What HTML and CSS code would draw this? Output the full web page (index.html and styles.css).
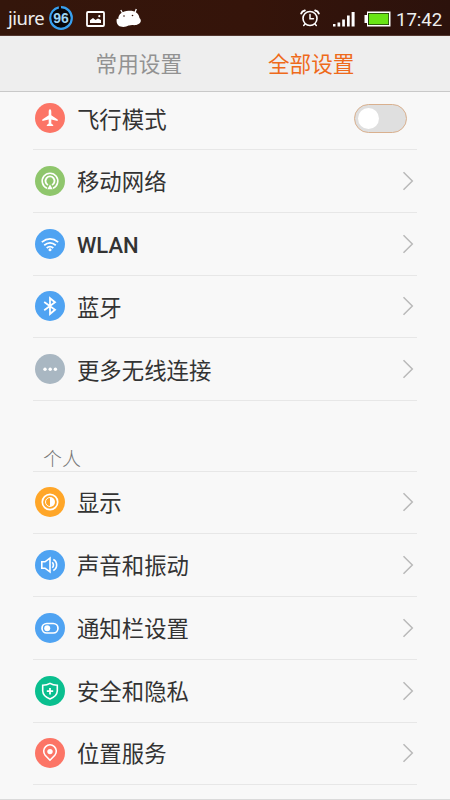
FILE: index.html
```
<!DOCTYPE html>
<html lang="zh-CN">
<head>
<meta charset="utf-8">
<title>全部设置</title>
<link rel="stylesheet" href="styles.css">
</head>
<body>
<div class="screen">
  <header class="status">
    <span class="carrier">jiure</span>
    <svg class="ring" width="24" height="24" viewBox="0 0 24 24"><circle cx="12" cy="12" r="11" fill="#08070a"/><circle cx="12" cy="12" r="10.8" fill="none" stroke="#38a0ef" stroke-width="2.2" stroke-dasharray="65.2 2.66" transform="rotate(-90 12 12)"/><text x="12" y="17" text-anchor="middle" class="ring-num">96</text></svg>
    <svg class="photo" width="19" height="16" viewBox="0 0 19 16"><rect x="1" y="1" width="17" height="14" rx="1" fill="none" stroke="#fff" stroke-width="1.8"/><path d="M4 12V9.300L7 7L9.500 9L12 7.500L15 9V12Z" fill="#fff"/><circle cx="13.300" cy="5.200" r="1.100" fill="#fff"/></svg>
    <svg class="droid" width="26" height="20" viewBox="0 0 26 20"><path d="M4.800 2L6.500 5M20.300 1L19 4.500" fill="none" stroke="#fff" stroke-width="1.300"/><path d="M2.300 11C2.300 6 6.500 3 12.500 2.700C19 2.400 23 5 23.500 10C25.500 11.500 25.300 15 22.500 16C20.500 17.300 18 17.300 16 17C14.500 17.300 13.500 17.300 12.500 17.500C10 19.300 5 19.500 2.500 17.500C.500 15.800.300 13 .800 10.800Z" fill="#fff"/><circle cx="8" cy="8" r=".8" fill="#34150c"/><circle cx="16.500" cy="7.500" r=".8" fill="#34150c"/></svg>
    <svg class="alarm" width="20" height="18" viewBox="0 0 20 18"><g fill="none" stroke="#fff" stroke-linecap="round"><circle cx="10" cy="9.500" r="7" stroke-width="1.600"/><path d="M10 5.500V9.700H13.500" stroke-width="1.500"/><path d="M1.200 4.500Q2 2 4.800 1.400M18.800 4.500Q18 2 15.200 1.400" stroke-width="2"/><path d="M5 15L3.700 16.500M15 15L16.300 16.500" stroke-width="1.500"/></g></svg>
    <svg class="signal" width="22" height="16" viewBox="0 0 22 16" fill="#fff"><path d="M0 13h2.500v2.500H0zM4.500 11.500h2.700v4H4.500zM9.200 8.500h2.700v7H9.200zM14 4.500h2.700v11H14zM18.600 1h3v14.500h-3z"/></svg>
    <svg class="battery" width="27" height="16" viewBox="0 0 27 16"><path d="M3 .500H26.500V15.500H3V12H.500V4H3Z" fill="#fff"/><rect x="4" y="2" width="21" height="12" fill="#203c08"/><rect x="5" y="2.800" width="19.300" height="10.400" fill="#69e515"/></svg>
    <span class="clock">17:42</span>
  </header>
  <nav class="tabs">
    <span class="tab">常用设置</span>
    <span class="tab active">全部设置</span>
  </nav>
  <main class="content">
    <ul class="list">
      <li class="row"><svg class="icon coral" viewBox="0 0 30 30"><path d="M15 6.200C14 6.200 13.700 7.500 13.700 9V12.300L7.300 16.600V18L13.700 16.500V20.500L11.800 22V22.900H18.200V22L16.300 20.500V16.500L22.700 18V16.600L16.300 12.300V9C16.300 7.500 16 6.200 15 6.200Z" fill="#fff"/></svg><span class="label">飞行模式</span><span class="switch"><span class="knob"></span></span></li>
      <li class="row"><svg class="icon green" viewBox="0 0 30 30"><g fill="none" stroke="#fff"><path d="M12 22.200A7.800 7.800 0 1 1 18 22.200" stroke-width="1.600"/><path d="M13 19A4.500 4.500 0 1 1 17 19" stroke-width="1.800"/></g><path d="M15 18.500L17.700 23.200H12.300Z" fill="#fff"/></svg><span class="label">移动网络</span><svg class="chevron" viewBox="0 0 12 20"><path d="M1.500 1.200L10.300 10L1.500 18.800"/></svg></li>
      <li class="row"><svg class="icon blue" viewBox="0 0 30 30"><g fill="none" stroke="#fff" stroke-width="1.800"><path d="M6.800 13.100Q15 6.800 23.200 13.100"/><path d="M9.200 16.200Q15 11.600 20.800 16.200"/><path d="M11.700 19Q15 16.200 18.300 19"/></g><circle cx="15" cy="20.800" r="1.500" fill="#fff"/></svg><span class="label latin">WLAN</span><svg class="chevron" viewBox="0 0 12 20"><path d="M1.500 1.200L10.300 10L1.500 18.800"/></svg></li>
      <li class="row"><svg class="icon blue" viewBox="0 0 30 30"><path d="M9.200 11L20 18.800L15 23V7.200L20 11.300L9.200 19.200" fill="none" stroke="#fff" stroke-width="1.800"/></svg><span class="label">蓝牙</span><svg class="chevron" viewBox="0 0 12 20"><path d="M1.500 1.200L10.300 10L1.500 18.800"/></svg></li>
      <li class="row"><svg class="icon gray" viewBox="0 0 30 30" fill="none"><g fill="#fff"><circle cx="10" cy="15.200" r="1.700"/><circle cx="15.200" cy="15.200" r="1.700"/><circle cx="20.400" cy="15.200" r="1.700"/></g></svg><span class="label">更多无线连接</span><svg class="chevron" viewBox="0 0 12 20"><path d="M1.500 1.200L10.300 10L1.500 18.800"/></svg></li>
    </ul>
    <h2 class="section">个人</h2>
    <ul class="list personal">
      <li class="row"><svg class="icon orange" viewBox="0 0 30 30"><circle cx="15" cy="15" r="7.700" fill="none" stroke="#fff" stroke-width="1.700"/><path d="M15 10.500A4.500 4.500 0 0 0 15 19.500" fill="none" stroke="#fff"/><path d="M15 10A5 5 0 0 1 15 20Z" fill="#fff"/></svg><span class="label">显示</span><svg class="chevron" viewBox="0 0 12 20"><path d="M1.500 1.200L10.300 10L1.500 18.800"/></svg></li>
      <li class="row"><svg class="icon blue" viewBox="0 0 30 30"><g fill="none" stroke="#fff" stroke-width="1.600"><path d="M6.800 11.800H10L15 8V22L10 18.200H6.800Z"/><path d="M17.300 12.200Q19.600 15 17.300 17.800"/><path d="M18.300 9.500A6.200 6.200 0 0 1 18.300 20.500"/></g></svg><span class="label">声音和振动</span><svg class="chevron" viewBox="0 0 12 20"><path d="M1.500 1.200L10.300 10L1.500 18.800"/></svg></li>
      <li class="row"><svg class="icon blue" viewBox="0 0 30 30"><rect x="7" y="10.500" width="16" height="9.500" rx="4.750" fill="none" stroke="#fff" stroke-width="1.700"/><circle cx="12.200" cy="15.200" r="3" fill="#fff"/></svg><span class="label">通知栏设置</span><svg class="chevron" viewBox="0 0 12 20"><path d="M1.500 1.200L10.300 10L1.500 18.800"/></svg></li>
      <li class="row"><svg class="icon teal" viewBox="0 0 30 30"><path d="M15 7.400Q18 9.300 22.300 9.300V15Q22 20.200 15 23Q8 20.200 7.700 15V9.300Q12 9.300 15 7.400Z" fill="none" stroke="#fff" stroke-width="1.600"/><path d="M15 12V18.400M11.800 15.200H18.200" stroke="#fff" stroke-width="1.800"/></svg><span class="label">安全和隐私</span><svg class="chevron" viewBox="0 0 12 20"><path d="M1.500 1.200L10.300 10L1.500 18.800"/></svg></li>
      <li class="row"><svg class="icon coral" viewBox="0 0 30 30"><path d="M15 22.200L10.200 17.200A6.300 6.300 0 1 1 19.800 17.200Z" fill="none" stroke="#fff" stroke-width="1.600"/><circle cx="15" cy="13.600" r="2.700" fill="#fff"/></svg><span class="label">位置服务</span><svg class="chevron" viewBox="0 0 12 20"><path d="M1.500 1.200L10.300 10L1.500 18.800"/></svg></li>
    </ul>
  </main>
</div>
</body>
</html>
```
FILE: styles.css
```
* { box-sizing: border-box; }
body { margin: 0; font-family: Roboto, "Noto Sans CJK SC", sans-serif; }
.screen {
  width: 450px;
  height: 800px;
  display: flex;
  flex-direction: column;
  overflow: hidden;
  background: #f8f8f8;
}
.status {
  flex: none;
  height: 36px;
  display: flex;
  align-items: center;
  background: linear-gradient(90deg, #34160b, #35140a 55%, #2c120c);
  border-bottom: 1px solid #52362e;
  color: #fff;
}
.carrier { width: 41px; margin: 0 0 0 8px; font: 18.5px/24px "Noto Sans", sans-serif; letter-spacing: -0.5px; color: #eee; }
.ring { flex: none; overflow: visible; }
.ring-num { font: bold 14px "Liberation Sans", sans-serif; fill: #9dd5f5; }
.photo { flex: none; margin: 2px 0 0 13px; }
.droid { flex: none; margin-left: 11px; }
.alarm { flex: none; margin-left: 158px; }
.signal { flex: none; margin: 2px 0 0 13px; }
.battery { flex: none; margin: 2px 0 0 9px; }
.clock { margin: 4px 0 0 5px; font-size: 18.7px; line-height: 24px; letter-spacing: -0.1px; color: #eee; white-space: nowrap; }
.tabs {
  flex: none;
  height: 56px;
  display: flex;
  justify-content: center;
  gap: 86px;
  background: #eee;
  border-bottom: 1px solid #c9c9c9;
}
.tab { padding-top: 1px; font-size: 21.6px; line-height: 55px; color: #929292; }
.active { color: #ee6a1b; }
.content {
  flex: 1;
  min-height: 0;
  overflow: hidden;
  border-bottom: 1px solid #dadada;
}
.list { margin: -4.75px 33px 0; padding: 0; list-style: none; }
.row {
  height: 62.75px;
  display: flex;
  align-items: center;
  border-bottom: 1px solid #e7e7e7;
  padding: 0 3px 0 2.4px;
}
.icon { flex: none; width: 30px; height: 30px; border-radius: 50%; }
.coral { background: #fc7566; }
.green { background: #8fc66c; }
.blue { background: #4fa3f2; }
.gray { background: #a9b7c2; }
.orange { background: #ffa628; }
.teal { background: #0abf8f; }
.label { margin-left: 11.6px; padding-top: 3px; font-size: 22.4px; line-height: 32px; color: #333; }
.latin { font-weight: 500; font-size: 22px; padding-top: 5px; }
.chevron { width: 12px; height: 20px; margin-left: auto; fill: none; stroke: #b9b9b9; stroke-width: 1.5; }
.switch {
  width: 53px;
  height: 29px;
  margin: 0 7px 0 auto;
  padding: 3px;
  border: 1px solid #d9b08e;
  border-radius: 15px;
  background: #dfdfdf;
}
.knob { display: block; width: 21px; height: 21px; border-radius: 50%; background: #fff; }
.section {
  height: 70.5px;
  margin: 0 33px;
  padding: 47px 0 0 10px;
  border-bottom: 1px solid #e7e7e7;
  font-size: 19px;
  line-height: 24px;
  font-weight: 300;
  color: #777;
}
.personal { margin-top: 0; }
.personal .label { padding-top: 2px; }
```
